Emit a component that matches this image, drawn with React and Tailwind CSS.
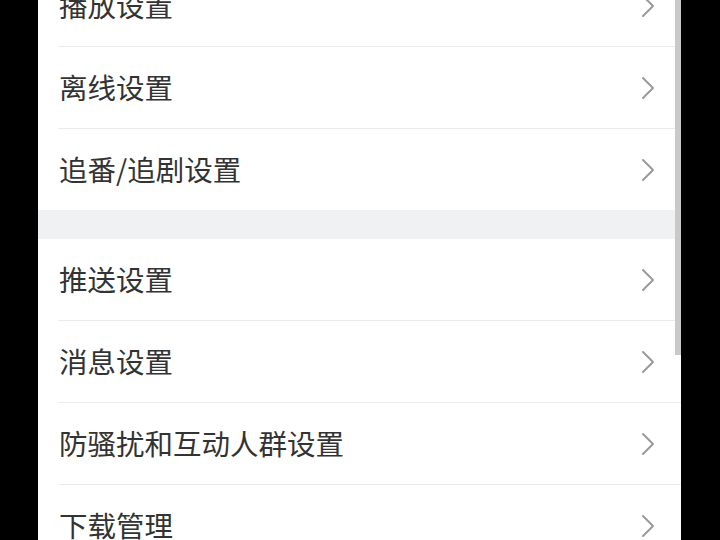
import React from "react";

const groups = [
  ["播放设置", "离线设置", "追番/追剧设置"],
  ["推送设置", "消息设置", "防骚扰和互动人群设置", "下载管理"],
];

function Chevron() {
  return (
    <svg width="14" height="24" viewBox="0 0 14 24" fill="none" className="shrink-0">
      <path d="M2 2 L12 12 L2 22" stroke="#9a9a9a" strokeWidth="2" strokeLinecap="round" strokeLinejoin="round" />
    </svg>
  );
}

function Row({ label, last }) {
  return (
    <div className="flex flex-col">
      <div className="h-[81px] flex items-center justify-between pl-[21px] pr-[26px]">
        <span className="text-[28.5px] leading-none text-[#333333]">{label}</span>
        <Chevron />
      </div>
      {!last && <div className="ml-[20px] h-px bg-[#ebebeb]" />}
    </div>
  );
}

export default function App() {
  return (
    <div
      className="w-[720px] h-[540px] overflow-hidden bg-black flex"
      style={{ fontFamily: '"Noto Sans CJK SC", "Noto Sans", sans-serif' }}
    >
      <div className="w-[38px] shrink-0 bg-black" />
      <div className="relative w-[643px] shrink-0 bg-white overflow-hidden">
        <div className="-mt-[35px] flex flex-col">
          {groups.map((g, gi) => (
            <div key={gi} className="flex flex-col">
              {gi > 0 && <div className="h-[29px] bg-[#f0f1f3]" />}
              {g.map((label, i) => (
                <Row key={label} label={label} last={gi === 0 && i === g.length - 1} />
              ))}
            </div>
          ))}
        </div>
        <div className="absolute right-0 top-0 w-[6px] h-[355px] bg-[#c9c9c9]" />
      </div>
      <div className="flex-1 bg-black" />
    </div>
  );
}
